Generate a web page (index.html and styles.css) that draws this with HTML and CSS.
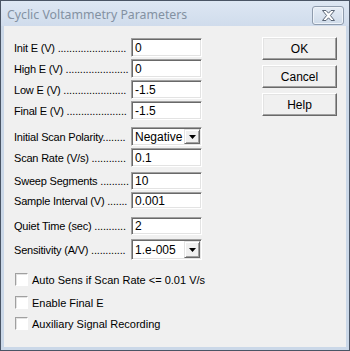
FILE: index.html
```html
<!DOCTYPE html>
<html>
<head>
<meta charset="utf-8">
<link rel="stylesheet" href="styles.css">
</head>
<body>
<div class="window">
  <div class="titlebar">
    <span class="title">Cyclic Voltammetry Parameters</span>
    <span class="close">
      <svg width="15" height="11" viewBox="0 0 15 11">
        <path d="M1.5 0.5 H5 L7.5 3.2 L10 0.5 H13.5 L9.4 5.5 L13.5 10.5 H10 L7.5 7.8 L5 10.5 H1.5 L5.6 5.5 Z" fill="#fff" stroke="#5a6575" stroke-width="1" stroke-linejoin="round"/>
      </svg>
    </span>
  </div>
  <div class="client">
    <div class="main">
      <div class="form">
        <div class="row r1"><span class="label">Init E (V) ........................</span><span class="field">0</span></div>
        <div class="row r2"><span class="label">High E (V) ......................</span><span class="field">0</span></div>
        <div class="row r3"><span class="label">Low E (V) ......................</span><span class="field">-1.5</span></div>
        <div class="row r4"><span class="label">Final E (V) .....................</span><span class="field">-1.5</span></div>
        <div class="row r5"><span class="label">Initial Scan Polarity........</span><span class="field select">Negative<span class="drop"><svg width="7" height="4" viewBox="0 0 7 4"><path d="M0 0H7L3.5 4Z" fill="#000"/></svg></span></span></div>
        <div class="row r6"><span class="label">Scan Rate (V/s) ............</span><span class="field">0.1</span></div>
        <div class="row r7"><span class="label">Sweep Segments ..........</span><span class="field">10</span></div>
        <div class="row r8"><span class="label">Sample Interval (V) .......</span><span class="field">0.001</span></div>
        <div class="row r9"><span class="label">Quiet Time (sec) ...........</span><span class="field">2</span></div>
        <div class="row r10"><span class="label">Sensitivity (A/V) ............</span><span class="field select">1.e-005<span class="drop"><svg width="7" height="4" viewBox="0 0 7 4"><path d="M0 0H7L3.5 4Z" fill="#000"/></svg></span></span></div>
      </div>
      <div class="buttons">
        <span class="btn">OK</span>
        <span class="btn">Cancel</span>
        <span class="btn">Help</span>
      </div>
    </div>
    <div class="checks">
      <div class="check c1"><span class="box"></span><span>Auto Sens if Scan Rate &lt;= 0.01 V/s</span></div>
      <div class="check c2"><span class="box"></span><span>Enable Final E</span></div>
      <div class="check c3"><span class="box"></span><span>Auxiliary Signal Recording</span></div>
    </div>
  </div>
</div>
</body>
</html>
```

FILE: styles.css
```css
* { box-sizing: border-box; }
html, body { margin: 0; padding: 0; }
body {
  width: 350px;
  height: 351px;
  font-family: "Liberation Sans", Arial, sans-serif;
  font-size: 11px;
  color: #000;
  background: #fff;
}
.window {
  width: 350px;
  height: 351px;
  border: 1px solid #4a5565;
  background: #cbd8e8;
  padding: 0 3px 3px 3px;
  display: flex;
  flex-direction: column;
}
.titlebar {
  height: 25px;
  display: flex;
  align-items: center;
  justify-content: space-between;
  background: linear-gradient(#dde7f3, #d0dcec);
  margin: 0 -3px;
  padding: 0 5px 0 6px;
}
.title {
  font-family: "Noto Sans", "Liberation Sans", sans-serif;
  font-size: 12.3px;
  color: #8391a2;
  margin-top: 2px;
}
.close {
  width: 32px;
  height: 19px;
  margin-top: 3px;
  border: 1px solid #8f9cad;
  border-radius: 3px;
  background: linear-gradient(#e6edf6, #cfdbe9);
  box-shadow: inset 0 0 0 1px #eef3f9;
  display: flex;
  align-items: center;
  justify-content: center;
}
.client {
  flex: 1;
  background: #f0f0f0;
  display: flex;
  flex-direction: column;
}
.main {
  display: flex;
  justify-content: space-between;
  padding: 0 9px 0 10px;
}
.form {
  display: flex;
  flex-direction: column;
  padding-top: 12px;
}
.row {
  display: flex;
  align-items: center;
  height: 19px;
  margin-top: 2px;
}
.row.r1 { margin-top: 0; }
.row.r5 { margin-top: 7px; }
.row.r7 { margin-top: 5px; height: 18px; }
.row.r8 { margin-top: 2px; height: 17px; }
.row.r9 { margin-top: 8px; height: 18px; }
.row.r10 { margin-top: 4px; height: 21px; }
.label {
  width: 117px;
  white-space: nowrap;
  letter-spacing: -0.2px;
}
.field {
  width: 71px;
  height: 100%;
  background: #fff;
  border: 1px solid;
  border-color: #a0a0a0 #fff #fff #a0a0a0;
  box-shadow: inset 1px 1px 0 #696969, inset -1px -1px 0 #e3e3e3;
  padding: 0 2px 0 3px;
  display: flex;
  align-items: center;
  font-size: 12px;
}
.select {
  justify-content: space-between;
  font-size: 12px;
  padding-right: 1px;
}
.drop {
  width: 16px;
  height: calc(100% - 2px);
  background: #f0f0f0;
  border: 1px solid;
  border-color: #e3e3e3 #696969 #696969 #e3e3e3;
  box-shadow: inset 1px 1px 0 #fff, inset -1px -1px 0 #a0a0a0;
  display: flex;
  align-items: center;
  justify-content: center;
}
.buttons {
  display: flex;
  flex-direction: column;
  gap: 5px;
  padding-top: 11px;
}
.btn {
  width: 75px;
  height: 23px;
  display: flex;
  align-items: center;
  justify-content: center;
  background: #f0f0f0;
  border: 1px solid;
  border-color: #fff #696969 #696969 #fff;
  box-shadow: inset -1px -1px 0 #a0a0a0, inset 1px 1px 0 #e3e3e3;
  font-size: 12px;
}
.checks {
  display: flex;
  flex-direction: column;
  padding-left: 11px;
  margin-top: 13px;
}
.check {
  display: flex;
  align-items: center;
  height: 13px;
  gap: 4px;
  font-size: 11px;
}
.check.c2 { margin-top: 10px; }
.check.c3 { margin-top: 8px; }
.box {
  width: 13px;
  height: 13px;
  background: #fff;
  border: 1px solid;
  border-color: #a0a0a0 #fff #fff #a0a0a0;
  box-shadow: inset 1px 1px 0 #e3e3e3;
}
```
